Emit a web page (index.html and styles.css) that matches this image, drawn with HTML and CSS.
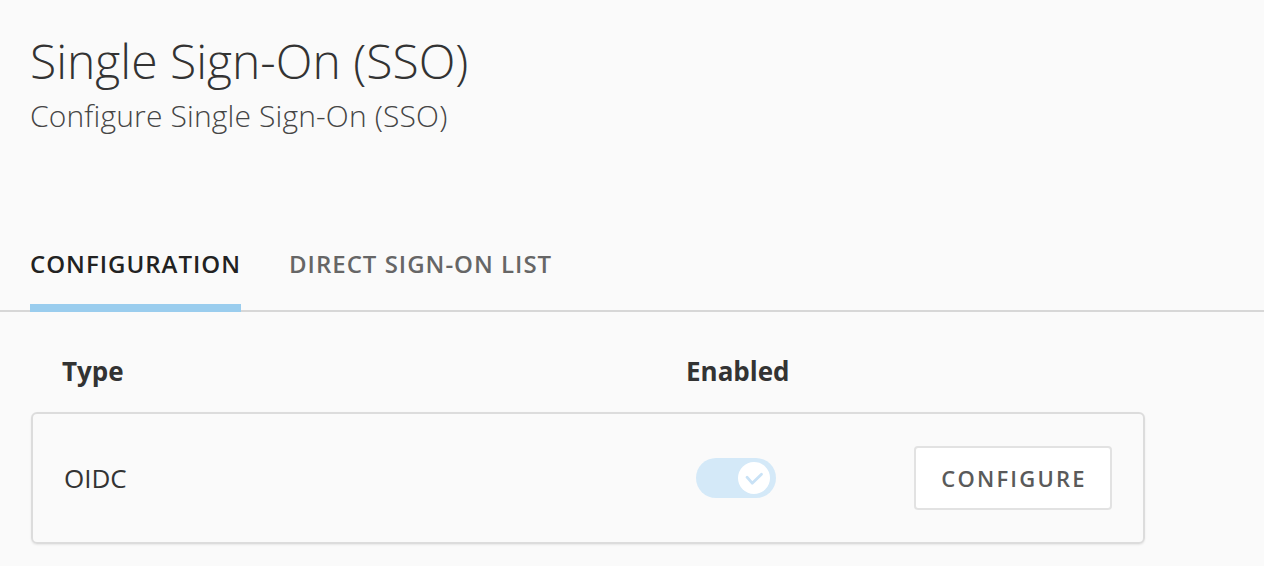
FILE: index.html
```html
<!DOCTYPE html>
<html>
<head>
<meta charset="utf-8">
<link rel="stylesheet" href="styles.css">
</head>
<body>
<div class="page">
  <header class="header">
    <h1 class="title">Single Sign-On (SSO)</h1>
    <p class="subtitle">Configure Single Sign-On (SSO)</p>
  </header>
  <nav class="tabs">
    <div class="tab active">CONFIGURATION</div>
    <div class="tab">DIRECT SIGN-ON LIST</div>
  </nav>
  <section class="content">
    <div class="cols head">
      <div class="col-type">Type</div>
      <div class="col-enabled">Enabled</div>
    </div>
    <div class="card">
      <div class="col-type name">OIDC</div>
      <div class="col-enabled">
        <div class="toggle">
          <div class="knob">
            <svg width="20" height="20" viewBox="0 0 20 20"><path d="M3 9.2 L8.2 15.2 L17.5 6.3" fill="none" stroke="#c9e2f6" stroke-width="2.8" stroke-linecap="round" stroke-linejoin="round"/></svg>
          </div>
        </div>
      </div>
      <button class="btn">CONFIGURE</button>
    </div>
  </section>
</div>
</body>
</html>
```
FILE: styles.css
```css
html, body {
  margin: 0;
  padding: 0;
  background: #fafafa;
  font-family: "Open Sans", "Noto Sans", sans-serif;
  color: #333;
}
.page {
  width: 1264px;
  height: 566px;
  overflow: hidden;
}
.header {
  padding: 32px 0 0 30px;
  height: 192px;
  box-sizing: border-box;
}
.title {
  margin: 0;
  font-size: 48px;
  font-weight: 300;
  line-height: 58px;
  color: #333;
}
.subtitle {
  margin: 8px 0 0 0;
  font-size: 30px;
  font-weight: 300;
  line-height: 36px;
  letter-spacing: 0.15px;
  color: #454545;
}
.tabs {
  display: flex;
  gap: 48px;
  padding-left: 30px;
  height: 120px;
  box-sizing: border-box;
  border-bottom: 2px solid #d7d7d7;
  align-items: flex-end;
}
.tab {
  font-size: 24px;
  font-weight: 600;
  letter-spacing: 1px;
  color: #666;
  padding-bottom: 25px;
  border-bottom: 8px solid transparent;
  margin-bottom: -2px;
  line-height: 30px;
}
.tab.active {
  color: #222;
  border-bottom-color: #9acdee;
}
.content {
  padding: 0 119px 0 31px;
}
.cols {
  display: flex;
}
.head {
  height: 100px;
  box-sizing: border-box;
  padding: 41px 0 0 31px;
  font-size: 26px;
  line-height: 36px;
  font-weight: 700;
  color: #333;
}
.col-type {
  width: 624px;
}
.col-enabled {
  width: 218px;
}
.card {
  display: flex;
  align-items: center;
  height: 132px;
  box-sizing: border-box;
  border: 2px solid #dcdcdc;
  border-radius: 6px;
  padding-left: 31px;
  box-shadow: 0 1px 2px rgba(0,0,0,0.08);
}
.name {
  font-size: 26px;
  font-weight: 400;
  color: #333;
}
.card .col-enabled {
  padding-left: 8px;
  width: 218px;
}
.toggle {
  width: 80px;
  height: 40px;
  border-radius: 20px;
  background: #d4e9f8;
  display: flex;
  align-items: center;
  justify-content: flex-end;
  padding-right: 6px;
  box-sizing: border-box;
}
.knob {
  width: 32px;
  height: 32px;
  border-radius: 50%;
  background: #fff;
  display: flex;
  align-items: center;
  justify-content: center;
}
.knob svg { display: block; }
.btn {
  width: 198px;
  height: 64px;
  background: #fff;
  border: 2px solid #e2e2e2;
  border-radius: 4px;
  font-family: "Open Sans", "Noto Sans", sans-serif;
  font-size: 22px;
  font-weight: 600;
  letter-spacing: 2.2px;
  color: #5a5a5a;
  padding: 0 0 0 2px;
}
```
